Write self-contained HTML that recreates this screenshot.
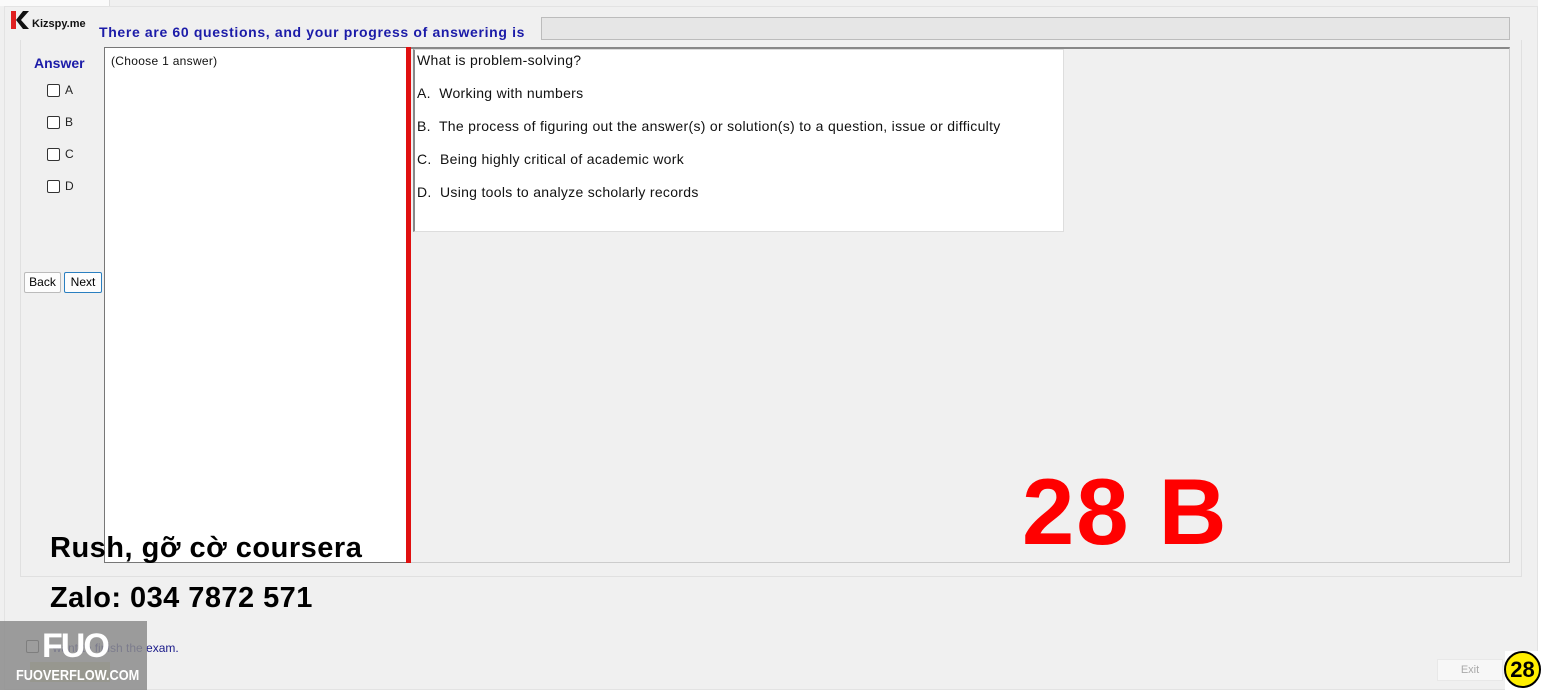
<!DOCTYPE html>
<html><head><meta charset="utf-8"><style>
*{margin:0;padding:0;box-sizing:border-box}
body{width:1542px;height:690px;background:#f0f0f0;position:relative;overflow:hidden;font-family:"Liberation Sans",Arial,sans-serif}
.a{position:absolute}
.cb{display:inline-block;width:13px;height:13px;border:1px solid #333;border-radius:2px;background:#fff;vertical-align:middle;margin-right:5px}
</style></head><body>
<div class="a" style="left:0;top:0;width:110px;height:6px;background:#fafafa;border-right:1px solid #ddd"></div>
<div class="a" style="left:1538px;top:0;width:4px;height:690px;background:#fff"></div>
<div class="a" style="left:4px;top:6px;width:1534px;height:684px;border:1px solid #e3e3e3"></div>
<div class="a" style="left:20px;top:40px;width:1502px;height:537px;border:1px solid #e0e0e0;border-top:none"></div>
<svg class="a" style="left:9px;top:9px" width="22" height="22" viewBox="0 0 22 22"><path d="M2 2h5v18H2z" fill="#e02020"/><path d="M7 11L14 2h6l-8 9 8 9h-6z" fill="#111"/></svg>
<div class="a" style="left:32px;top:18px;font-size:11px;font-weight:bold;color:#111">Kizspy.me</div>
<div class="a" style="left:99px;top:24px;font-size:14px;font-weight:bold;color:#1b1ba8;letter-spacing:0.65px">There are 60 questions, and your progress of answering is</div>
<div class="a" style="left:541px;top:17px;width:969px;height:23px;background:#e6e6e6;border:1px solid #bcbcbc"></div>
<div class="a" style="left:34px;top:55px;font-size:14px;font-weight:bold;color:#1b1ba8">Answer</div>
<div class="a" style="left:47px;top:83px;font-size:12px;color:#222;line-height:14px">
<div style="height:32px"><span class="cb"></span>A</div>
<div style="height:32px"><span class="cb"></span>B</div>
<div style="height:32px"><span class="cb"></span>C</div>
<div style="height:32px"><span class="cb"></span>D</div>
</div>
<div class="a" style="left:24px;top:272px;width:37px;height:21px;border:1px solid #bbb;background:#fdfdfd;font-size:12px;text-align:center;line-height:19px;border-radius:2px">Back</div>
<div class="a" style="left:64px;top:272px;width:38px;height:21px;border:1px solid #2a7fc0;background:#fdfdfd;font-size:12px;text-align:center;line-height:19px;border-radius:2px">Next</div>
<div class="a" style="left:104px;top:47px;width:302px;height:516px;background:#fff;border:1px solid #777;border-right:none"></div>
<div class="a" style="left:111px;top:54px;font-size:12px;color:#111;letter-spacing:0.3px">(Choose 1 answer)</div>
<div class="a" style="left:406px;top:47px;width:5px;height:516px;background:#e01010"></div>
<div class="a" style="left:411px;top:47px;width:1099px;height:516px;border-top:2px solid #888;border-right:1px solid #ccc;border-bottom:1px solid #ccc"></div>
<div class="a" style="left:413px;top:49px;width:651px;height:183px;background:#fff;border:1px solid #ddd;border-left:2px solid #888"></div>
<div class="a" style="left:417px;top:52px;font-size:14px;color:#111;line-height:33px;letter-spacing:0.3px">
<div style="line-height:16px;margin-bottom:17px">What is problem-solving?</div>
<div style="margin-top:-8px">A.&nbsp; Working with numbers</div>
<div>B.&nbsp; The process of figuring out the answer(s) or solution(s) to a question, issue or difficulty</div>
<div>C.&nbsp; Being highly critical of academic work</div>
<div>D.&nbsp; Using tools to analyze scholarly records</div>
</div>
<div class="a" style="left:1022px;top:462px;font-size:94px;font-weight:bold;color:#ff0000;line-height:100px;letter-spacing:2px">28 B</div>
<div class="a" style="left:50px;top:532px;font-size:29px;font-weight:bold;color:#000;letter-spacing:0.5px">Rush, gỡ cờ coursera</div>
<div class="a" style="left:50px;top:582px;font-size:29px;font-weight:bold;color:#000;letter-spacing:0.45px">Zalo: 034 7872 571</div>
<div class="a" style="left:26px;top:640px;width:13px;height:13px;border:1px solid #333;border-radius:2px;background:#fff"></div>
<div class="a" style="left:46px;top:641px;font-size:12px;color:#1b1b8a">I want to finish the exam.</div>
<div class="a" style="left:30px;top:662px;width:80px;height:20px;background:#d8d8a0"></div>
<div class="a" style="left:0;top:621px;width:147px;height:69px;background:rgba(140,140,140,0.85)"></div>
<div class="a" style="left:42px;top:627px;font-size:34px;font-weight:bold;color:#fff;letter-spacing:-2px">FUO</div>
<div class="a" style="left:16px;top:667px;font-size:15px;font-weight:bold;color:#fff;transform:scaleX(0.85);transform-origin:left">FUOVERFLOW.COM</div>
<div class="a" style="left:1437px;top:659px;width:66px;height:22px;background:#f7f7f7;border:1px solid #e8e8e8;font-size:11px;color:#aaa;text-align:center;line-height:20px">Exit</div>
<div class="a" style="left:1505px;top:651px;width:37px;height:39px;background:#fff"></div>
<div class="a" style="left:1504px;top:651px;width:37px;height:37px;border-radius:50%;background:#ffee00;border:2px solid #000;font-size:22px;font-weight:bold;text-align:center;line-height:33px;color:#000">28</div>
</body></html>
